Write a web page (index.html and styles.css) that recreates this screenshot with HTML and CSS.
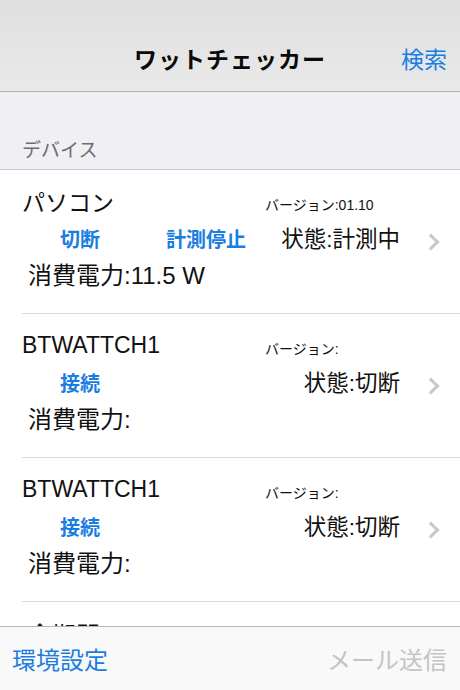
FILE: index.html
```html
<!DOCTYPE html>
<html lang="ja">
<head>
  <meta charset="UTF-8">
  <meta name="viewport" content="width=device-width, initial-scale=1.0">
  <title>ワットチェッカー</title>
  <link rel="stylesheet" href="styles.css">
</head>
<body>
  <div class="navbar">
    <span class="nav-space"></span>
    <h1 class="nav-title">ワットチェッカー</h1>
    <a class="nav-button" href="#">検索</a>
  </div>

  <div class="section-header">デバイス</div>

  <ul class="device-list">
    <li class="device">
      <div class="device-body">
        <div class="line">
          <span class="name">パソコン</span>
          <span class="version">バージョン:01.10</span>
        </div>
        <div class="line">
          <div class="actions">
            <a class="action" href="#">切断</a>
            <a class="action" href="#">計測停止</a>
          </div>
          <span class="status">状態:計測中</span>
        </div>
        <div class="line power">消費電力:11.5 W</div>
      </div>
      <span class="chevron"></span>
    </li>

    <li class="device">
      <div class="device-body">
        <div class="line">
          <span class="name">BTWATTCH1</span>
          <span class="version">バージョン:</span>
        </div>
        <div class="line">
          <div class="actions">
            <a class="action" href="#">接続</a>
          </div>
          <span class="status">状態:切断</span>
        </div>
        <div class="line power">消費電力:</div>
      </div>
      <span class="chevron"></span>
    </li>

    <li class="device">
      <div class="device-body">
        <div class="line">
          <span class="name">BTWATTCH1</span>
          <span class="version">バージョン:</span>
        </div>
        <div class="line">
          <div class="actions">
            <a class="action" href="#">接続</a>
          </div>
          <span class="status">状態:切断</span>
        </div>
        <div class="line power">消費電力:</div>
      </div>
      <span class="chevron"></span>
    </li>

    <li class="device">
      <div class="device-body">
        <div class="line power">全期間</div>
      </div>
    </li>
  </ul>

  <div class="toolbar">
    <a class="tool-button" href="#">環境設定</a>
    <span class="tool-button disabled">メール送信</span>
  </div>
</body>
</html>
```

FILE: styles.css
```css
html, body {
  margin: 0;
  height: 100%;
  overflow: hidden;
}
body {
  font-family: "Liberation Sans", "Noto Sans CJK JP", sans-serif;
  background-color: #efeff4;
  color: #111;
}
a {
  text-decoration: none;
}
.navbar {
  height: 92px;
  box-sizing: border-box;
  padding: 40px 13px 12px 13px;
  display: grid;
  grid-template-columns: 1fr auto 1fr;
  align-items: center;
  background: linear-gradient(#dfdfdf, #e9e9e9);
  border-bottom: 1px solid #b1b1b1;
}
.nav-title {
  margin: 0;
  font-size: 23px;
  font-weight: bold;
  line-height: 40px;
  letter-spacing: 1px;
  color: #0a0a0a;
}
.nav-button {
  justify-self: end;
  font-size: 23px;
  line-height: 40px;
  color: #1a7de2;
}
.section-header {
  height: 78px;
  box-sizing: border-box;
  padding: 0 22px 5px;
  display: flex;
  align-items: flex-end;
  font-size: 19px;
  line-height: 26px;
  color: #6d6d72;
  border-bottom: 1px solid #c8c7cc;
}
.device-list {
  list-style: none;
  margin: 0;
  padding: 0;
  background-color: #fff;
}
.device {
  display: flex;
  height: 144px;
  box-sizing: border-box;
  margin-left: 22px;
  border-bottom: 1px solid #d8d8dc;
}
.device-body {
  width: 378px;
  padding-top: 13px;
  margin-right: 27px;
}
.line {
  display: flex;
  align-items: center;
  height: 36px;
}
.name {
  width: 243px;
  font-size: 23px;
}
.version {
  font-size: 14px;
  padding-top: 5px;
}
.actions {
  display: flex;
  padding-left: 38px;
}
.action {
  width: 106px;
  font-size: 20px;
  font-weight: bold;
  color: #1a7de2;
  padding-top: 2px;
}
.status {
  margin-left: auto;
  font-size: 22.5px;
}
.power {
  padding-left: 6px;
  font-size: 24px;
}
.chevron {
  align-self: center;
  width: 9px;
  height: 9px;
  margin-left: -2px;
  border-top: 3px solid #c7c7cc;
  border-right: 3px solid #c7c7cc;
  transform: rotate(45deg);
}
.toolbar {
  position: fixed;
  left: 0;
  right: 0;
  bottom: 0;
  height: 64px;
  box-sizing: border-box;
  padding: 0 13px 0 12px;
  display: flex;
  justify-content: space-between;
  align-items: center;
  background-color: #f9f9f9;
  border-top: 1px solid #b8b8b8;
}
.tool-button {
  font-size: 24px;
  color: #1a7de2;
}
.tool-button.disabled {
  color: #c4c4c4;
}
```
